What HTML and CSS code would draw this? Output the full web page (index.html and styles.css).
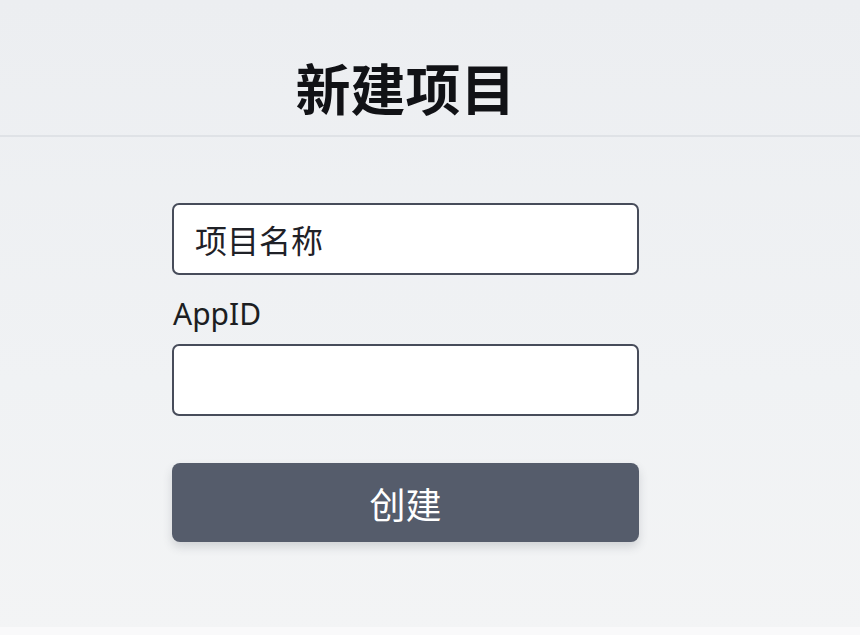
FILE: index.html
```html
<!DOCTYPE html>
<html lang="zh">
<head>
<meta charset="utf-8">
<title>新建项目</title>
<link rel="stylesheet" href="styles.css">
</head>
<body>
<header class="page-header">
  <h1 class="title">新建项目</h1>
</header>
<main class="form-area">
  <form class="project-form">
    <input class="field" type="text" placeholder="项目名称">
    <label class="label" for="appid">AppID</label>
    <input class="field" id="appid" type="text">
    <button class="submit" type="button">创建</button>
  </form>
</main>
<div class="bottom-strip"></div>
</body>
</html>
```
FILE: styles.css
```css
html, body {
  margin: 0;
  padding: 0;
}
body {
  width: 860px;
  height: 635px;
  overflow: hidden;
  background: linear-gradient(180deg, #eceef1 0%, #f0f2f4 60%, #f3f4f5 100%);
  font-family: "Noto Sans CJK SC", "Noto Sans", sans-serif;
  display: flex;
  flex-direction: column;
}
.page-header {
  box-sizing: border-box;
  height: 137px;
  border-bottom: 2px solid #dfe2e6;
  display: flex;
  justify-content: center;
  padding-right: 49px;
}
.title {
  margin: 0;
  margin-top: 46px;
  font-size: 55px;
  line-height: 80px;
  height: 80px;
  font-weight: 700;
  color: #111216;
}
.form-area {
  flex: 1;
  padding-left: 172px;
}
.project-form {
  width: 467px;
  display: flex;
  flex-direction: column;
  padding-top: 66px;
}
.field {
  box-sizing: border-box;
  width: 467px;
  height: 72px;
  border: 2.5px solid #474c5a;
  border-radius: 7px;
  background: #ffffff;
  padding: 0 21px;
  font-family: "Noto Sans CJK SC", sans-serif;
  font-size: 32px;
  color: #1d1f24;
  outline: none;
}
.field::placeholder {
  color: #1f2127;
  opacity: 1;
}
.label {
  font-family: "Noto Sans", "Noto Sans CJK SC", sans-serif;
  font-size: 30px;
  line-height: 34px;
  color: #1c1e22;
  margin: 22px 0 13px 1px;
}
.submit {
  margin-top: 47px;
  height: 79px;
  width: 467px;
  border: none;
  border-radius: 8px;
  background: #555c6b;
  color: #ffffff;
  font-family: "Noto Sans CJK SC", sans-serif;
  font-size: 36px;
  box-shadow: 0 5px 10px rgba(60, 66, 80, 0.18);
  padding: 0;
}
.bottom-strip {
  height: 8px;
  background: #f9f9fa;
}
```
